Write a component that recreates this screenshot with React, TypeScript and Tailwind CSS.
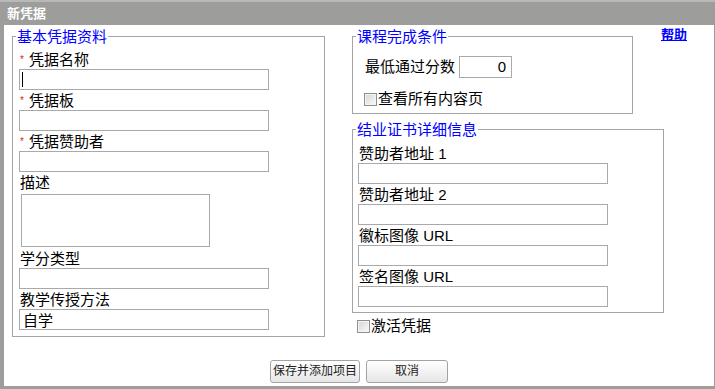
import type { ReactNode } from 'react'

/* ── Small pieces ───────────────────────────────────────────────────── */

function TextInput({ value, width = 'w-[250px]' }: { value?: string; width?: string }) {
  return (
    <input
      readOnly
      defaultValue={value}
      className={`block h-[21px] ${width} border border-[#a9a9a9] bg-white px-[3px] text-[15px] leading-[19px] text-black outline-none`}
    />
  )
}

function Box() {
  return (
    <span className="inline-block h-[13px] w-[13px] border border-[#8e8f8f] bg-gradient-to-br from-[#d6d6d6] to-[#fbfbfb] shadow-[inset_0_0_0_1px_#f4f4f4]" />
  )
}

function Field({ label, required, children, last }: { label: ReactNode; required?: boolean; children: ReactNode; last?: boolean }) {
  return (
    <div className={last ? '' : 'mb-[2px]'}>
      <div className="flex h-[18px] items-start pl-[1px] leading-[18px]">
        {required && <span className="mt-[4px] w-[9px] text-[10px] leading-[10px] text-[#d9261c]">*</span>}
        <span>{label}</span>
      </div>
      {children}
    </div>
  )
}

function Legend({ children }: { children: ReactNode }) {
  return <legend className="ml-[3px] px-[1px] text-[15px] leading-[17px] text-[#0000ff]">{children}</legend>
}

/* ── Page ───────────────────────────────────────────────────────────── */

export default function App() {
  return (
    <div className="flex h-[389px] w-[715px] flex-col bg-[#9d9d9b] [font-family:'Liberation_Sans','Noto_Sans_CJK_SC',sans-serif] text-[15px] text-black">
      {/* page behind the dialog */}
      <div className="h-[2px] bg-[#b9b9b9]" />

      {/* Title bar */}
      <div className="flex h-[23px] items-center pl-[7px] text-[13px] font-bold text-white">新凭据</div>

      {/* Dialog body */}
      <div className="mb-[3px] ml-[4px] mr-[1px] flex flex-1 flex-col bg-white">
        <div className="flex items-start pl-[8px] pt-[3px]">
          {/* Basic info */}
          <fieldset className="m-0 w-[313px] min-w-0 border border-[#a5a5a5] p-0">
            <Legend>基本凭据资料</Legend>
            <div className="px-[6px] pb-[6px] pt-[6px]">
              <Field label="凭据名称" required>
                <div className="relative">
                  <TextInput />
                  <span className="absolute left-[3px] top-[3px] h-[15px] w-[1px] bg-black" />
                </div>
              </Field>
              <Field label="凭据板" required>
                <TextInput />
              </Field>
              <Field label="凭据赞助者" required>
                <TextInput />
              </Field>
              <div className="mb-[3px]">
                <div className="h-[18px] pl-[1px] leading-[18px]">描述</div>
                <textarea readOnly className="ml-[2px] mt-[2px] block h-[53px] w-[189px] resize-none border border-[#a9a9a9] outline-none" />
              </div>
              <Field label="学分类型">
                <TextInput />
              </Field>
              <Field label="教学传授方法" last>
                <TextInput value="自学" />
              </Field>
            </div>
          </fieldset>

          {/* Right column */}
          <div className="ml-[27px] flex flex-col">
            <div className="flex items-start">
              <fieldset className="m-0 w-[281px] min-w-0 border border-[#a5a5a5] p-0">
                <Legend>课程完成条件</Legend>
                <div className="pb-[5px] pl-[12px] pt-[11px]">
                  <div className="flex h-[22px] items-center">
                    <span className="leading-[18px]">最低通过分数</span>
                    <input
                      readOnly
                      defaultValue="0"
                      className="ml-[4px] block h-[22px] w-[53px] border border-[#a9a9a9] px-[5px] text-right text-[15px] outline-none"
                    />
                  </div>
                  <div className="-ml-[1px] mt-[12px] flex h-[18px] items-center">
                    <Box />
                    <span className="ml-[1px] leading-[18px]">查看所有内容页</span>
                  </div>
                </div>
              </fieldset>
              <a href="#" className="ml-[28px] mt-[-1px] text-[13px] font-bold leading-[15px] text-[#0000ff] underline">
                帮助
              </a>
            </div>

            {/* Certificate details */}
            <fieldset className="m-0 mt-[7px] w-[312px] min-w-0 border border-[#a5a5a5] p-0">
              <Legend>结业证书详细信息</Legend>
              <div className="pb-[5px] pl-[5px] pt-[7px]">
                <Field label="赞助者地址 1">
                  <TextInput />
                </Field>
                <Field label="赞助者地址 2">
                  <TextInput />
                </Field>
                <Field label="徽标图像 URL">
                  <TextInput />
                </Field>
                <Field label="签名图像 URL" last>
                  <TextInput />
                </Field>
              </div>
            </fieldset>

            <div className="ml-[5px] mt-[4px] flex h-[18px] items-center">
              <Box />
              <span className="ml-[1px] leading-[18px]">激活凭据</span>
            </div>
          </div>
        </div>

        {/* Buttons */}
        <div className="mt-[23px] flex justify-center gap-[6px]">
          <button className="h-[23px] w-[90px] rounded-[3px] border border-[#a3a3a3] bg-gradient-to-b from-white to-[#e6e6e6] text-[12px] leading-[21px] text-[#222]">
            保存并添加项目
          </button>
          <button className="h-[23px] w-[82px] rounded-[3px] border border-[#a3a3a3] bg-gradient-to-b from-white to-[#e6e6e6] text-[12px] leading-[21px] text-[#222]">
            取消
          </button>
        </div>
      </div>
    </div>
  )
}
